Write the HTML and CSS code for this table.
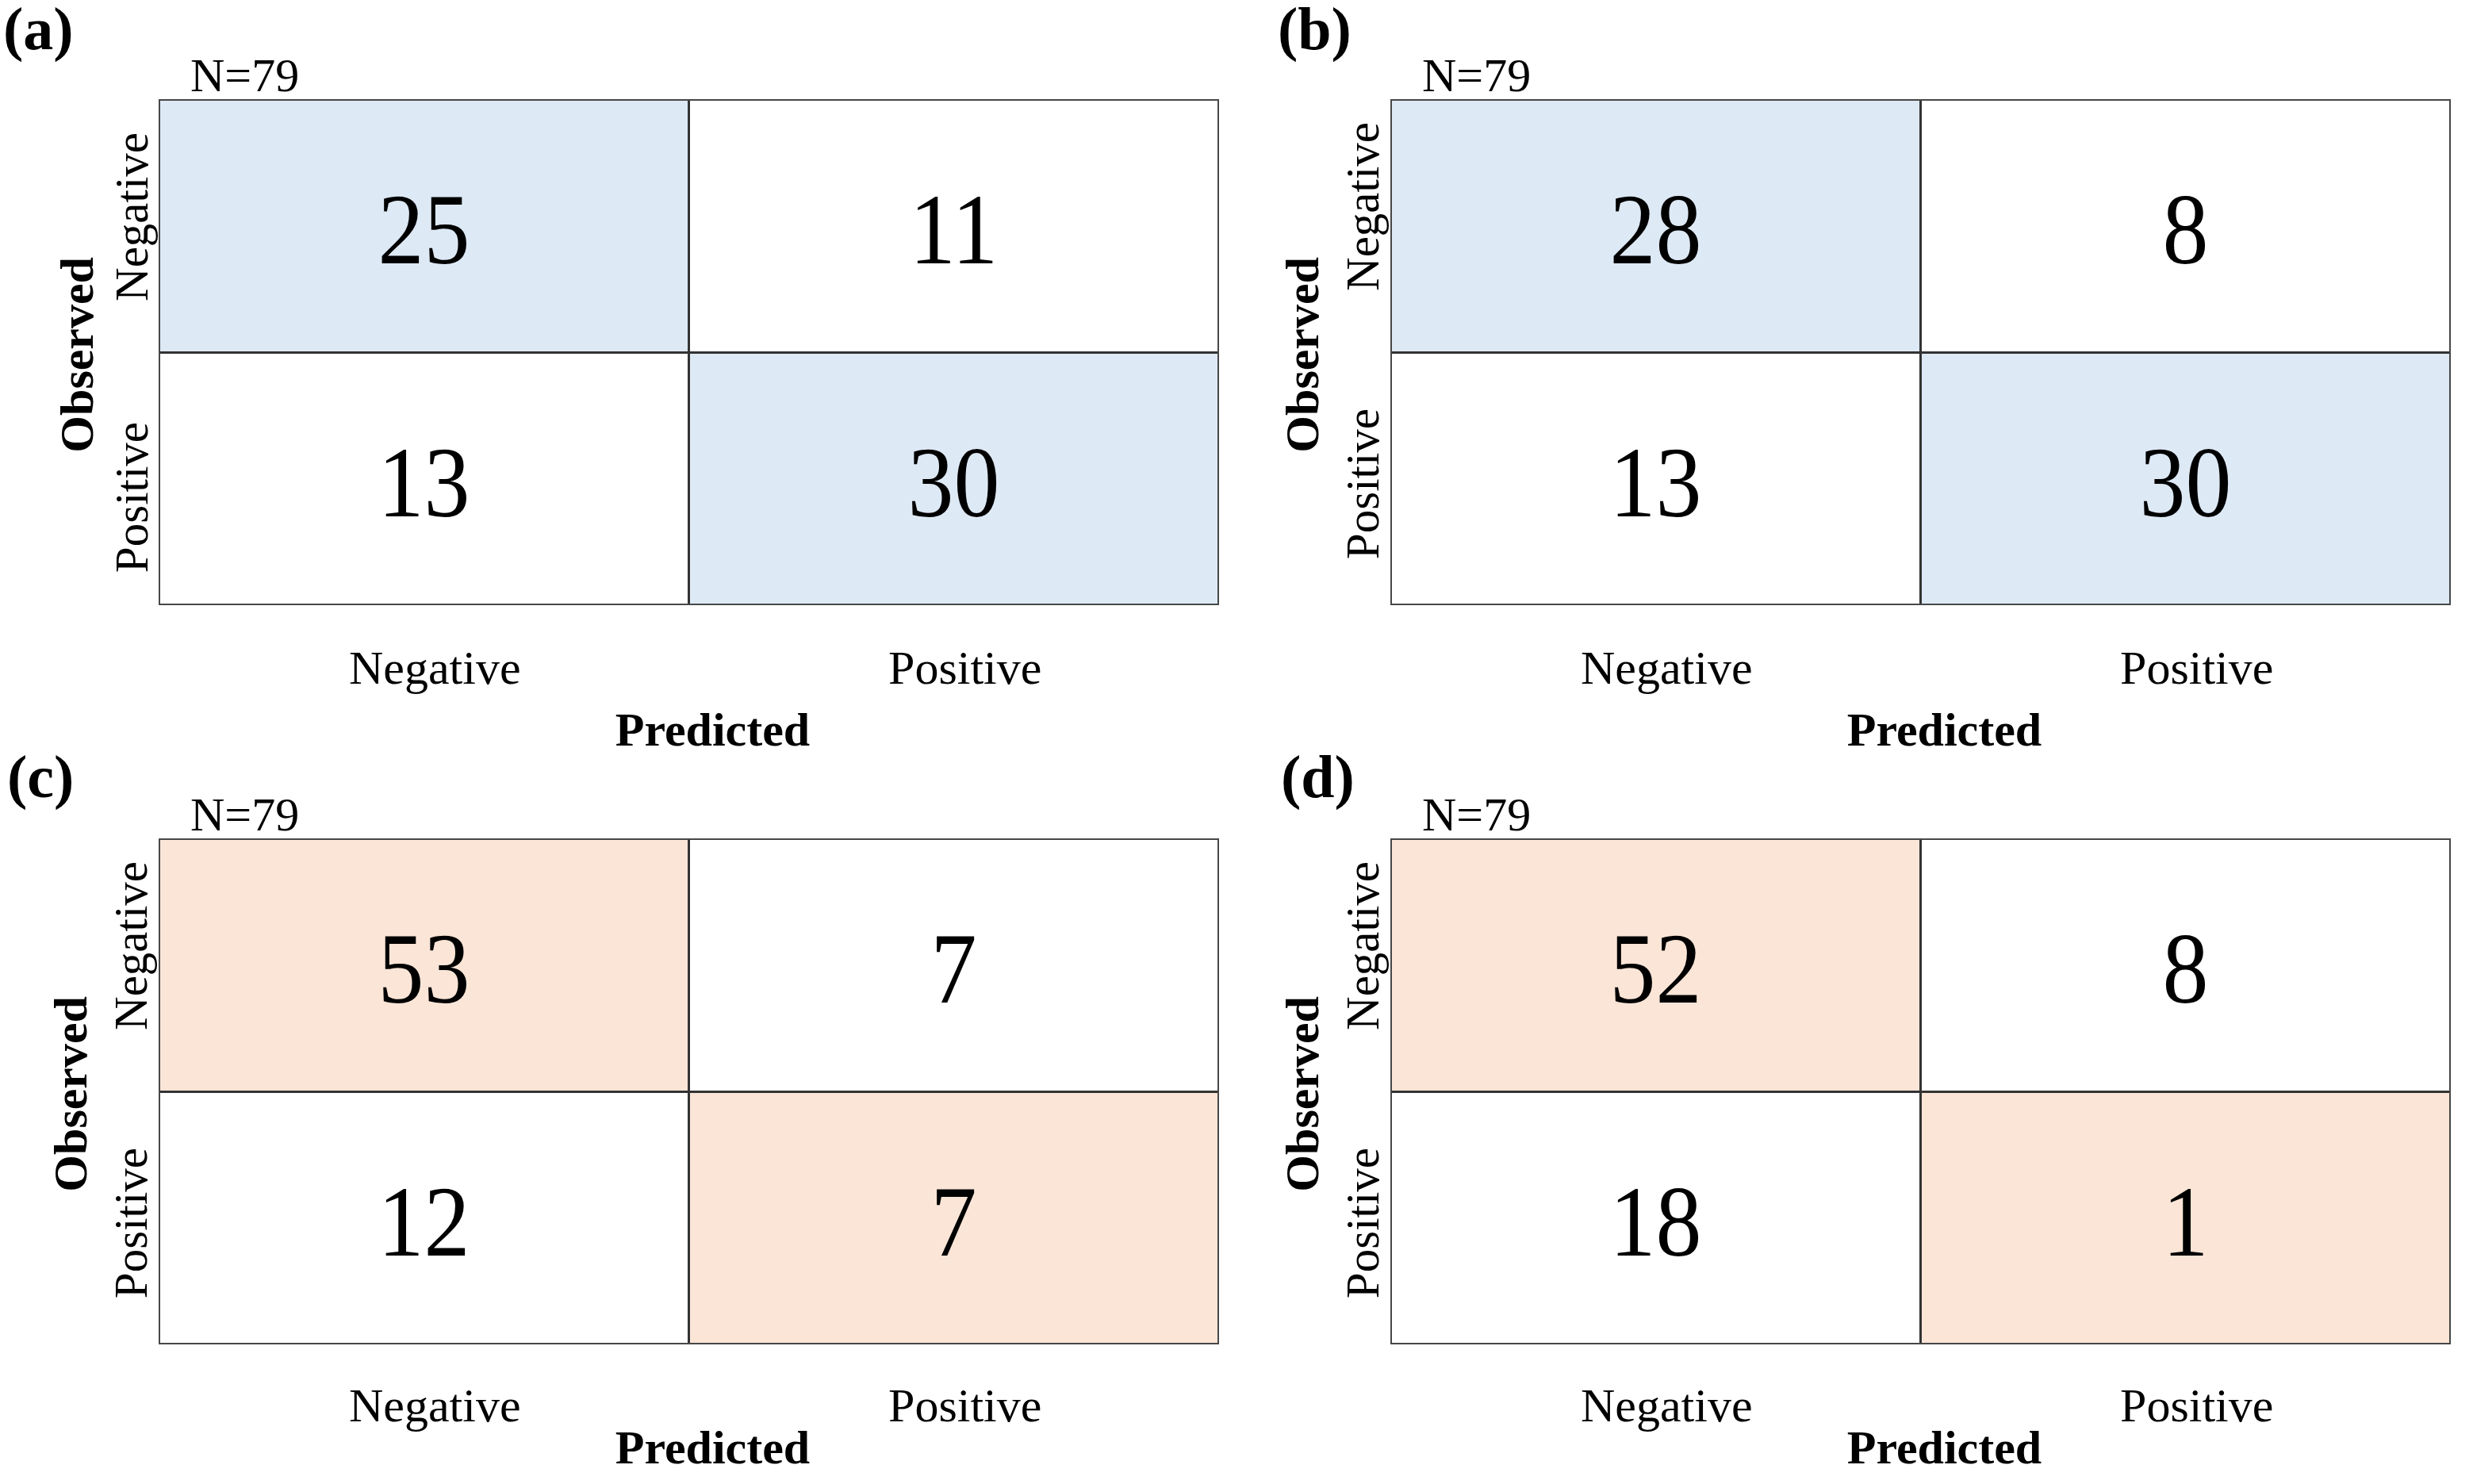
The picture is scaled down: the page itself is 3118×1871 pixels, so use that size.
FILE: index.html
```html
<!DOCTYPE html>
<html lang="en">
<head>
<meta charset="utf-8">
<title>Confusion matrices</title>
<link rel="stylesheet" href="styles.css">
</head>
<body>
<div class="figure">
  <section class="panel panel--a">
    <div class="tag">(a)</div>
    <div class="n">N=79</div>
    <div class="yaxis">
      <div class="ytitle"><span>Observed</span></div>
      <div class="yticks"><span>Negative</span><span>Positive</span></div>
    </div>
    <div class="matrix matrix--blue">
      <div class="cell hit"><span>25</span></div>
      <div class="cell"><span>11</span></div>
      <div class="cell"><span>13</span></div>
      <div class="cell hit"><span>30</span></div>
    </div>
    <div class="xticks"><span>Negative</span><span>Positive</span></div>
    <div class="xtitle">Predicted</div>
  </section>

  <section class="panel panel--b">
    <div class="tag">(b)</div>
    <div class="n">N=79</div>
    <div class="yaxis">
      <div class="ytitle"><span>Observed</span></div>
      <div class="yticks"><span>Negative</span><span>Positive</span></div>
    </div>
    <div class="matrix matrix--blue">
      <div class="cell hit"><span>28</span></div>
      <div class="cell"><span>8</span></div>
      <div class="cell"><span>13</span></div>
      <div class="cell hit"><span>30</span></div>
    </div>
    <div class="xticks"><span>Negative</span><span>Positive</span></div>
    <div class="xtitle">Predicted</div>
  </section>

  <section class="panel panel--c panel--low">
    <div class="tag">(c)</div>
    <div class="n">N=79</div>
    <div class="yaxis">
      <div class="ytitle"><span>Observed</span></div>
      <div class="yticks"><span>Negative</span><span>Positive</span></div>
    </div>
    <div class="matrix matrix--peach">
      <div class="cell hit"><span>53</span></div>
      <div class="cell"><span>7</span></div>
      <div class="cell"><span>12</span></div>
      <div class="cell hit"><span>7</span></div>
    </div>
    <div class="xticks"><span>Negative</span><span>Positive</span></div>
    <div class="xtitle">Predicted</div>
  </section>

  <section class="panel panel--d panel--low">
    <div class="tag">(d)</div>
    <div class="n">N=79</div>
    <div class="yaxis">
      <div class="ytitle"><span>Observed</span></div>
      <div class="yticks"><span>Negative</span><span>Positive</span></div>
    </div>
    <div class="matrix matrix--peach">
      <div class="cell hit"><span>52</span></div>
      <div class="cell"><span>8</span></div>
      <div class="cell"><span>18</span></div>
      <div class="cell hit"><span>1</span></div>
    </div>
    <div class="xticks"><span>Negative</span><span>Positive</span></div>
    <div class="xtitle">Predicted</div>
  </section>
</div>
</body>
</html>
```

FILE: styles.css
```css
html, body {
  margin: 0;
  padding: 0;
  background: #ffffff;
}

body {
  width: 3118px;
  height: 1871px;
  overflow: hidden;
  font-family: "Liberation Serif", "Times New Roman", serif;
  color: #000000;
}

.figure {
  display: grid;
  grid-template-columns: 1537px 1537px;
  grid-template-rows: 932px 939px;
  column-gap: 16px;
}

.panel {
  display: grid;
  grid-template-columns: 200px 1337px;
  grid-template-rows: 125px 638px auto auto;
  align-content: start;
}

/* panel letter */
.tag {
  grid-column: 1;
  grid-row: 1;
  font-weight: 700;
  font-size: 76px;
  line-height: 72px;
  padding-left: 4px;
  white-space: nowrap;
}
.panel--b .tag { padding-left: 58px; }
.panel--c .tag { padding-left: 9px; padding-top: 11px; }
.panel--d .tag { padding-left: 62px; padding-top: 11px; }

/* N=79 */
.n {
  grid-column: 2;
  grid-row: 1;
  font-size: 60px;
  line-height: 47px;
  padding: 72px 0 0 40px;
  white-space: nowrap;
}

/* left axis */
.yaxis {
  grid-column: 1;
  grid-row: 2;
  display: flex;
}

.ytitle {
  width: 70px;
  margin-left: 54px;
  padding-top: 6px;
  box-sizing: border-box;
  display: flex;
  align-items: center;
  justify-content: center;
}
.panel--a .ytitle { margin-left: 62px; }

.ytitle span {
  writing-mode: vertical-rl;
  transform: rotate(180deg);
  white-space: nowrap;
  font-weight: 700;
  font-size: 60px;
  line-height: 66px;
}

.yticks {
  width: 70px;
  margin-left: auto;
  box-sizing: border-box;
  padding: 29px 0 58px;
  display: flex;
  flex-direction: column;
  justify-content: space-between;
  align-items: center;
}
.panel--a .yticks { padding: 42px 0 41px; }

.yticks span {
  writing-mode: vertical-rl;
  transform: rotate(180deg);
  white-space: nowrap;
  font-size: 59px;
  line-height: 66px;
}

/* matrix */
.matrix {
  grid-column: 2;
  grid-row: 2;
  display: grid;
  grid-template-columns: 1fr 1fr;
  grid-template-rows: 1fr 1fr;
  gap: 3px;
  background: #333333;
  border: 2px solid #474747;
  box-sizing: border-box;
}

.cell {
  background: #ffffff;
  display: flex;
  align-items: center;
  justify-content: center;
  padding-top: 10px;
  box-sizing: border-box;
  font-size: 116px;
}

.cell span {
  display: block;
  line-height: 1.15;
  transform: scaleY(1.1);
}

.matrix--blue .hit { background: #dde9f5; }
.matrix--peach .hit { background: #fae5d7; }

/* bottom axis */
.xticks {
  grid-column: 2;
  grid-row: 3;
  display: grid;
  grid-template-columns: 1fr 1fr;
  font-size: 60px;
  line-height: 66px;
  padding-top: 46px;
}
.panel--low .xticks { padding-top: 44px; }

.xticks span {
  text-align: center;
  padding-left: 28px;
  white-space: nowrap;
}

.xtitle {
  grid-column: 2;
  grid-row: 4;
  font-weight: 700;
  font-size: 60px;
  line-height: 20px;
  padding: 35px 0 0 60px;
  text-align: center;
  white-space: nowrap;
}
.panel--low .xtitle { padding-top: 10px; }
```
